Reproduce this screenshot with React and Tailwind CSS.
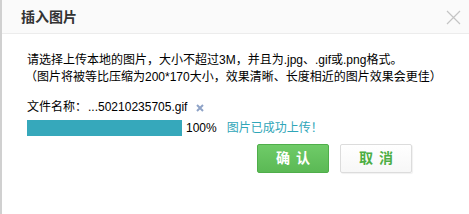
import React from "react";

const font = { fontFamily: '"Liberation Sans", "Noto Sans CJK SC", sans-serif' };

const App = () => {
  return (
    <div
      className="w-[469px] h-[214px] bg-white border-l-2 border-[#d0d0d0] overflow-hidden text-[#222]"
      style={font}
    >
      {/* Header */}
      <div className="h-[34px] bg-[#fafafa] border-b border-[#ececec] flex items-center justify-between pl-[19px] pr-[8px]">
        <span className="text-[14px] font-bold text-[#333] leading-none">插入图片</span>
        <svg width="15" height="15" viewBox="0 0 15 15" className="mt-[1px]">
          <path d="M1 1L14 14M14 1L1 14" stroke="#c4c4c4" strokeWidth="1.2" fill="none" />
        </svg>
      </div>

      {/* Body */}
      <div className="pl-[25px] pt-[18px]">
        <p className="text-[12px] leading-[17px] text-black">
          请选择上传本地的图片，大小不超过3M，并且为.jpg、.gif或.png格式。
        </p>
        <p className="text-[12px] leading-[17px] text-black -ml-[2px]">
          （图片将被等比压缩为200*170大小，效果清晰、长度相近的图片效果会更佳）
        </p>

        <div className="mt-[12px] flex items-center h-[18px] text-[12px] text-black">
          <span>文件名称：</span>
          <span className="ml-[1px]">...50210235705.gif</span>
          <svg width="8" height="8" viewBox="0 0 8 8" className="ml-[9px] mt-[1px]">
            <path d="M1 1L7 7M7 1L1 7" stroke="#8fa3c7" strokeWidth="2" fill="none" />
          </svg>
        </div>

        <div className="mt-[4px] flex items-center h-[16px] text-[12px]">
          <div className="w-[155px] h-[16px] bg-[#36a8bb]" />
          <span className="ml-[4px] text-black">100%</span>
          <span className="ml-[10px] text-[#2fa6b8]">图片已成功上传！</span>
        </div>
      </div>

      {/* Buttons */}
      <div className="mt-[8px] flex justify-end gap-[11px] pr-[57px]">
        <button className="w-[72px] h-[29px] rounded-[2px] border border-[#4fae4a] bg-gradient-to-b from-[#6fcb68] to-[#5bb955] text-white text-[14px] font-bold tracking-[6px] pl-[6px]">
          确认
        </button>
        <button className="w-[72px] h-[29px] rounded-[2px] border border-[#dcdcdc] bg-gradient-to-b from-white to-[#f7f7f7] text-[#4cae44] text-[14px] font-bold tracking-[6px] pl-[6px] shadow-[1px_1px_1px_rgba(0,0,0,0.06)]">
          取消
        </button>
      </div>
    </div>
  );
};

export default App;
